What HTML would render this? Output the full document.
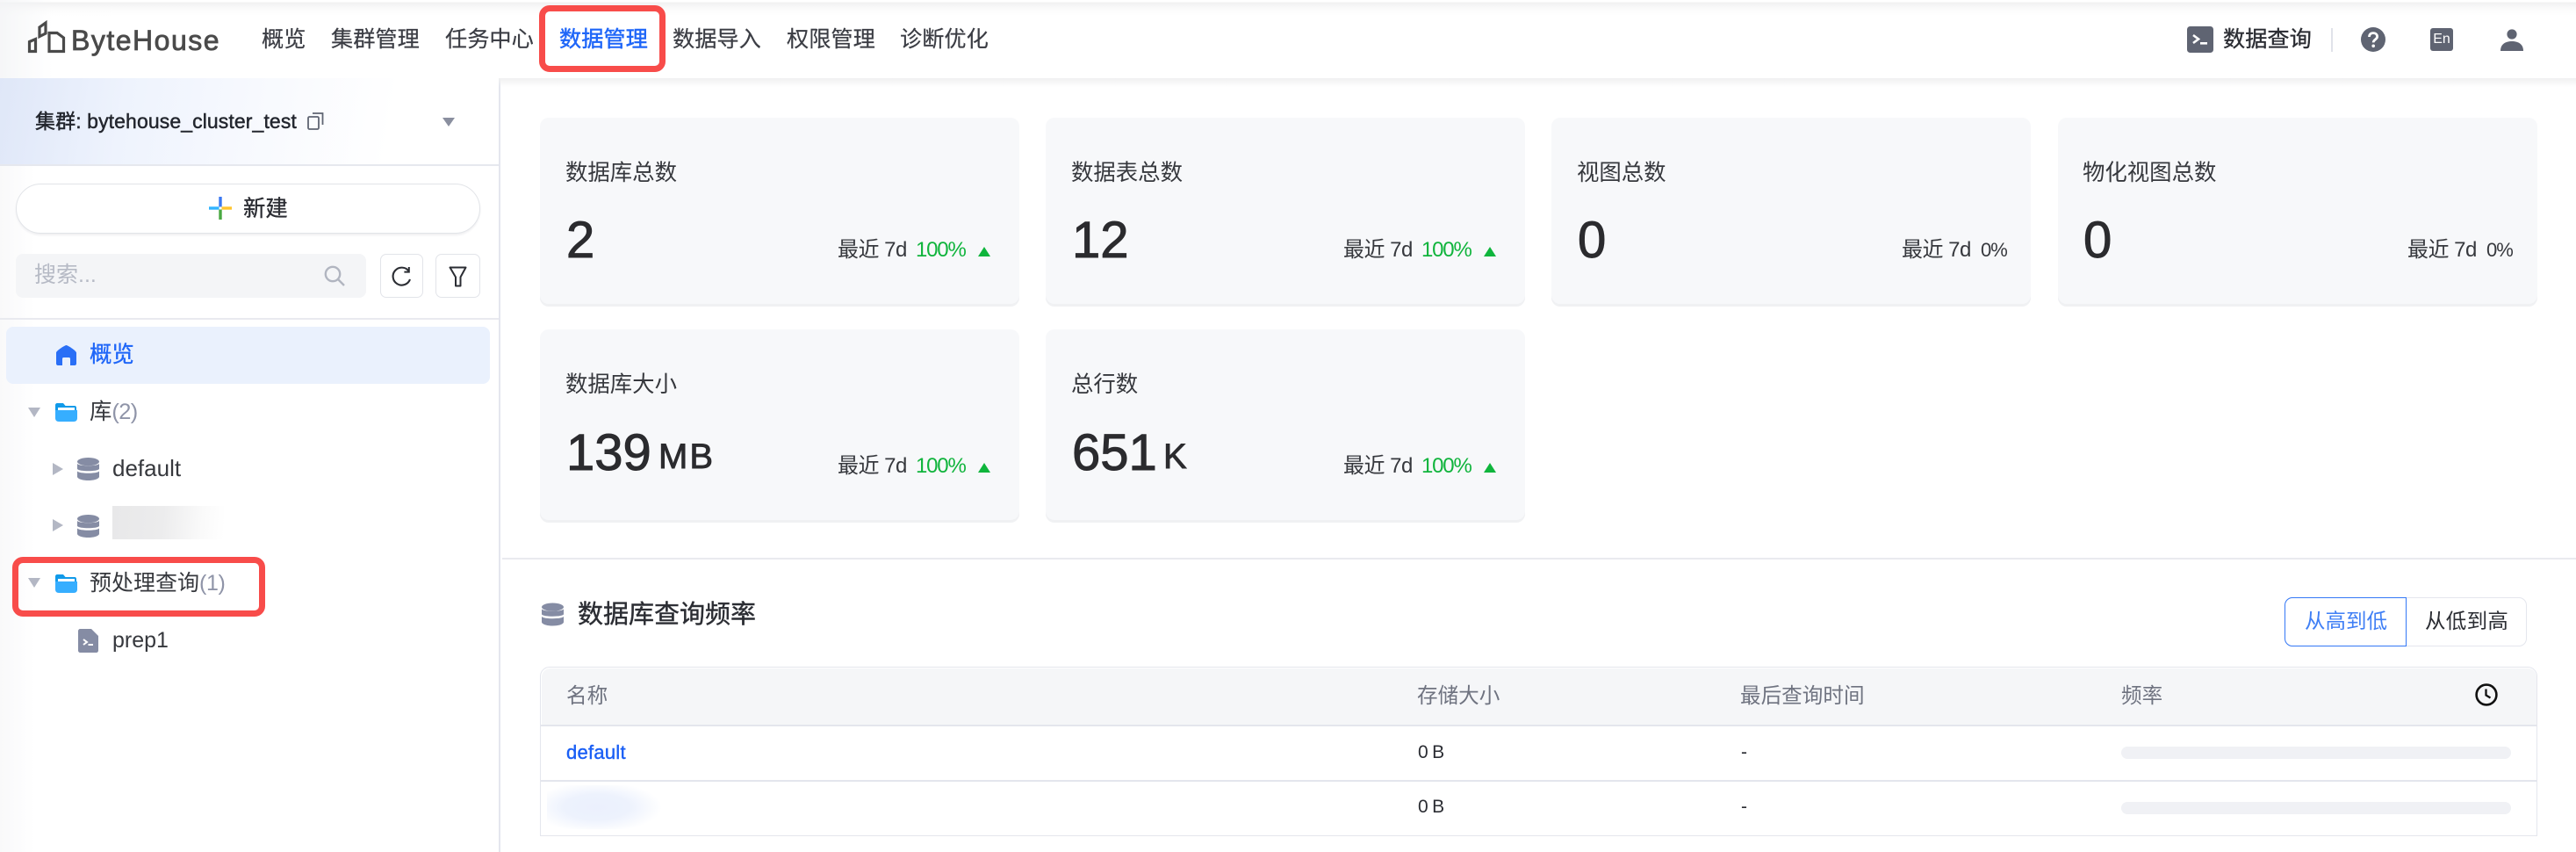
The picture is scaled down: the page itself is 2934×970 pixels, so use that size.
<!DOCTYPE html>
<html lang="zh">
<head>
<meta charset="utf-8">
<title>ByteHouse</title>
<style>
html,body{margin:0;padding:0;width:2934px;height:970px;overflow:hidden;background:#fff}
body{position:relative;font-family:"Liberation Sans","Noto Sans CJK SC",sans-serif;color:#2b2d33;filter:blur(.35px)}
.a{position:absolute}
.t{position:absolute;white-space:nowrap;height:40px;line-height:40px;margin-top:-20px;font-size:25.4px}
.nav{color:#3b3d44;-webkit-text-stroke:.2px #3b3d44;font-size:25.2px}
.m{-webkit-text-stroke:.45px currentColor}
svg{position:absolute;display:block;overflow:visible}
.card{position:absolute;width:546px;background:#f7f8fa;border-radius:10px;box-shadow:inset 0 -3px 0 #f0f1f3}
.title{color:#36383d}
.num{font-size:58px;color:#2b2b2e;-webkit-text-stroke:1px #2b2b2e;height:70px;line-height:70px;margin-top:-35px}
.unit{font-size:40px;letter-spacing:2px;color:#2b2b2e;-webkit-text-stroke:.9px #2b2b2e;height:50px;line-height:50px;margin-top:-25px}
.meta{font-size:24px;color:#36383d;letter-spacing:-.5px}
.g{font-size:24px;color:#10b43c;letter-spacing:-1.2px}
.z{font-size:22px;color:#36383d;letter-spacing:-1px}
.tri{position:absolute;width:0;height:0;border-left:7.5px solid transparent;border-right:7.5px solid transparent;border-bottom:11px solid #0fb53c}
.th{font-size:23.6px;color:#6f7380}
.td{font-size:21px;color:#2b2d33;letter-spacing:-.7px}
.bar{position:absolute;left:2416px;width:444px;height:14px;border-radius:7px;background:#f0f1f5}
.red{position:absolute;box-sizing:border-box;border:7.5px solid #f84c4a;border-radius:12px}
.h{position:absolute;background:#e4e6ed}
</style>
</head>
<body>

<!-- sidebar background -->
<div class="a" style="left:0;top:89px;width:568px;height:881px;background:linear-gradient(90deg,#f9f9fa 0,#fff 40px)"></div>
<div class="a" style="left:568px;top:89px;width:2px;height:881px;background:#e4e6ee"></div>

<!-- header -->
<div class="a" style="left:0;top:0;width:2934px;height:89px;background:linear-gradient(180deg,#fff 0,#fff 2px,#f1f1f2 3px,#fbfbfb 10px,#fff 18px)"></div>
<div class="a" style="left:0;top:0;width:60px;height:89px;background:linear-gradient(90deg,rgba(243,244,246,.8),rgba(255,255,255,0))"></div>
<div class="a" style="left:0;top:89px;width:2934px;height:10px;background:linear-gradient(180deg,#f0f0f1,rgba(255,255,255,0))"></div>

<svg style="left:0;top:0" width="90" height="70" viewBox="0 0 90 70" fill="none" stroke="#4a4a4a" stroke-width="3.2" stroke-linejoin="miter">
  <path d="M33.5 47.5 L40.5 44.5 V58.5 H33.5 Z"/>
  <path d="M45 31 L52 26 V38 L45 41.5 Z"/>
  <path d="M56 37.5 H65 L72.5 43 V58.5 H56 Z"/>
</svg>
<div class="t m" style="left:81px;top:46px;font-size:32px;letter-spacing:1.5px;color:#4a4a4a;-webkit-text-stroke:.8px #4a4a4a">ByteHouse</div>

<div class="t nav" style="left:298px;top:45px">概览</div>
<div class="t nav" style="left:377px;top:45px">集群管理</div>
<div class="t nav" style="left:507px;top:45px">任务中心</div>
<div class="t nav" style="left:637px;top:45px;color:#1f66f8;-webkit-text-stroke:.45px #1f66f8">数据管理</div>
<div class="t nav" style="left:766px;top:45px">数据导入</div>
<div class="t nav" style="left:896px;top:45px">权限管理</div>
<div class="t nav" style="left:1025px;top:45px">诊断优化</div>
<div class="red" style="left:614px;top:6px;width:144px;height:76px"></div>

<!-- header right -->
<svg style="left:2491px;top:30px" width="30" height="30" viewBox="0 0 30 30">
  <rect width="30" height="30" rx="3.5" fill="#5f6472"/>
  <path d="M7 10 L13 14.5 L7 19" fill="none" stroke="#fff" stroke-width="2.6"/>
  <rect x="15" y="18" width="8" height="2.6" fill="#fff"/>
</svg>
<div class="t" style="left:2532px;top:45px;font-size:25.2px;color:#2b2d33;-webkit-text-stroke:.35px #2b2d33">数据查询</div>
<div class="a" style="left:2655px;top:32px;width:2px;height:27px;background:#e0e2e9"></div>
<svg style="left:2689px;top:31px" width="28" height="28" viewBox="0 0 28 28">
  <circle cx="14" cy="14" r="14" fill="#5f6472"/>
  <path d="M9.5 11 C9.5 8 11.5 6.6 14 6.6 C16.8 6.6 18.6 8.3 18.6 10.6 C18.6 14 14.2 14 14.2 17.4" fill="none" stroke="#fff" stroke-width="2.8"/>
  <circle cx="14.2" cy="21.3" r="1.8" fill="#fff"/>
</svg>
<div class="a" style="left:2768px;top:32px;width:26px;height:26px;border-radius:3px;background:#5f6472;color:#fff;font-size:16px;line-height:26px;text-align:center">En</div>
<svg style="left:2848px;top:33px" width="26" height="25" viewBox="0 0 26 25">
  <circle cx="13" cy="6" r="5.6" fill="#5f6472"/>
  <path d="M0 25 C0 17 6 14 13 14 C20 14 26 17 26 25 Z" fill="#5f6472"/>
</svg>

<!-- cluster -->
<div class="a" style="left:0;top:89px;width:568px;height:98px;background:linear-gradient(100deg,#dfe7f8 0,#eef3fd 25%,#f7f9fe 50%,#fff 78%);border-bottom:2px solid #e6e8ee;box-sizing:content-box"></div>
<div class="t" style="left:40px;top:138px;font-size:23px;letter-spacing:.1px;color:#23262e;-webkit-text-stroke:.45px #23262e">集群: bytehouse_cluster_test</div>
<svg style="left:350px;top:128px" width="19" height="20" viewBox="0 0 19 20" fill="none" stroke="#5f6472" stroke-width="1.8">
  <rect x="1" y="5" width="12" height="14" rx="1.5"/>
  <path d="M6 1 H17.5 V14"/>
</svg>
<div class="a" style="left:504px;top:134px;width:0;height:0;border-left:7px solid transparent;border-right:7px solid transparent;border-top:10px solid #8a8f9f"></div>

<!-- new button -->
<div class="a" style="left:18px;top:209px;width:529px;height:57px;box-sizing:border-box;background:#fff;border:1.5px solid #e2e4e8;border-radius:29px;box-shadow:0 2px 2px #f0f0f2"></div>
<svg style="left:238px;top:224px" width="26" height="26" viewBox="0 0 26 26">
  <rect x="11.3" y="0" width="3.4" height="11.5" fill="#3a78f2"/>
  <rect x="0" y="11.3" width="11.5" height="3.4" fill="#30b4ff"/>
  <rect x="14.5" y="11.3" width="11.5" height="3.4" fill="#ffc52e"/>
  <rect x="11.3" y="14.5" width="3.4" height="11.5" fill="#49a942"/>
</svg>
<div class="t" style="left:277px;top:238px;color:#2b2d33;-webkit-text-stroke:.35px #2b2d33">新建</div>

<!-- search -->
<div class="a" style="left:18px;top:289px;width:399px;height:50px;background:#f4f5f7;border-radius:8px"></div>
<div class="t" style="left:39px;top:313px;font-size:25px;color:#b6bac5">搜索...</div>
<svg style="left:369px;top:302px" width="25" height="24" viewBox="0 0 25 24" fill="none" stroke="#b1b5c0" stroke-width="2.4">
  <circle cx="10" cy="10" r="8.2"/>
  <path d="M16 16 L23 23"/>
</svg>
<div class="a" style="left:433px;top:289px;width:49px;height:50px;box-sizing:border-box;background:#fff;border:1.5px solid #e2e4e9;border-radius:7px"></div>
<svg style="left:446px;top:303px" width="23" height="24" viewBox="0 0 23 24" fill="none" stroke="#2b2d33" stroke-width="2.1">
  <path d="M19.5 5.5 A10 10 0 1 0 21 15"/>
  <path d="M19.8 1 V6.6 H14.4" stroke-width="2"/>
</svg>
<div class="a" style="left:496px;top:289px;width:51px;height:50px;box-sizing:border-box;background:#fff;border:1.5px solid #e2e4e9;border-radius:7px"></div>
<svg style="left:511px;top:303px" width="21" height="24" viewBox="0 0 21 24" fill="none" stroke="#2b2d33" stroke-width="2" stroke-linejoin="round">
  <path d="M1.5 1.5 H19.5 L13.5 12.5 V22.5 H8 V12.5 Z"/>
</svg>

<div class="a" style="left:0;top:362px;width:568px;height:1.5px;background:#e9eaef"></div>

<!-- tree -->
<div class="a" style="left:7px;top:372px;width:551px;height:65px;background:#eaf1fd;border-radius:8px"></div>
<svg style="left:64px;top:393px" width="23" height="23" viewBox="0 0 23 23">
  <path d="M11.5 0 C13 0 22.5 6 23 8.5 V21 C23 22.2 22 23 21 23 H16 V15.5 C16 14.5 15.3 14 14.5 14 H8.5 C7.7 14 7 14.5 7 15.5 V23 H2 C1 23 0 22.2 0 21 V8.5 C.5 6 10 0 11.5 0 Z" fill="#2a6ff6"/>
</svg>
<div class="t" style="left:102px;top:404px;color:#1f66f8;-webkit-text-stroke:.35px #1f66f8">概览</div>

<div class="a" style="left:32px;top:464px;width:0;height:0;border-left:7.5px solid transparent;border-right:7.5px solid transparent;border-top:11px solid #b3b7c4"></div>
<svg style="left:63px;top:459px" width="25" height="21" viewBox="0 0 25 21">
  <path d="M2 0 H9 L11.5 3 H22 C23.3 3 24 4 24 5 V9 H0 V2 C0 1 1 0 2 0 Z" fill="#119ae9"/>
  <rect x="3" y="5" width="19" height="4" fill="#fff"/>
  <path d="M0 8 H25 V17 C25 19.5 23.5 21 21 21 H4 C1.5 21 0 19.5 0 17 Z" fill="#36aeff"/>
</svg>
<div class="t" style="left:102px;top:469px;color:#36383d">库<span style="color:#8f94a8;letter-spacing:-.6px">(2)</span></div>

<div class="a" style="left:60px;top:527px;width:0;height:0;border-top:7.5px solid transparent;border-bottom:7.5px solid transparent;border-left:12px solid #b3b7c4"></div>
<svg style="left:88px;top:521px" width="25" height="26" viewBox="0 0 25 26">
  <ellipse cx="12.5" cy="4.6" rx="12.5" ry="4.6" fill="#858ca4"/>
  <path d="M0 7 C2.5 10 22.5 10 25 7 V13 C22.5 16 2.5 16 0 13 Z" fill="#858ca4"/>
  <path d="M0 15.5 C2.5 18.5 22.5 18.5 25 15.5 V22 C24 24.8 18 26 12.5 26 C7 26 1 24.8 0 22 Z" fill="#858ca4"/>
</svg>
<div class="t" style="left:128px;top:533px;font-size:26px;color:#36383d">default</div>

<div class="a" style="left:60px;top:591px;width:0;height:0;border-top:7.5px solid transparent;border-bottom:7.5px solid transparent;border-left:12px solid #b3b7c4"></div>
<svg style="left:88px;top:586px" width="25" height="26" viewBox="0 0 25 26">
  <ellipse cx="12.5" cy="4.6" rx="12.5" ry="4.6" fill="#858ca4"/>
  <path d="M0 7 C2.5 10 22.5 10 25 7 V13 C22.5 16 2.5 16 0 13 Z" fill="#858ca4"/>
  <path d="M0 15.5 C2.5 18.5 22.5 18.5 25 15.5 V22 C24 24.8 18 26 12.5 26 C7 26 1 24.8 0 22 Z" fill="#858ca4"/>
</svg>
<div class="a" style="left:128px;top:576px;width:127px;height:38px;background:linear-gradient(95deg,#e8e8e9 0,#ececed 45%,#fafafa 80%,#fff 100%)"></div>

<div class="a" style="left:32px;top:658px;width:0;height:0;border-left:7.5px solid transparent;border-right:7.5px solid transparent;border-top:11px solid #b3b7c4"></div>
<svg style="left:63px;top:654px" width="25" height="21" viewBox="0 0 25 21">
  <path d="M2 0 H9 L11.5 3 H22 C23.3 3 24 4 24 5 V9 H0 V2 C0 1 1 0 2 0 Z" fill="#119ae9"/>
  <rect x="3" y="5" width="19" height="4" fill="#fff"/>
  <path d="M0 8 H25 V17 C25 19.5 23.5 21 21 21 H4 C1.5 21 0 19.5 0 17 Z" fill="#36aeff"/>
</svg>
<div class="t" style="left:102px;top:664px;font-size:25px;color:#36383d">预处理查询<span style="color:#8f94a8;letter-spacing:-.4px">(1)</span></div>
<div class="red" style="left:14px;top:634px;width:288px;height:68px"></div>

<svg style="left:89px;top:716px" width="23" height="27" viewBox="0 0 23 27">
  <path d="M2.5 0 H15 L23 8 V24.5 C23 26 22 27 20.5 27 H2.5 C1 27 0 26 0 24.5 V2.5 C0 1 1 0 2.5 0 Z" fill="#858ca4"/>
  <path d="M6 12 L10 15 L6 18" fill="none" stroke="#fff" stroke-width="2"/>
  <rect x="11.5" y="17" width="5.5" height="2" fill="#fff"/>
</svg>
<div class="t" style="left:128px;top:729px;font-size:25px;color:#36383d">prep1</div>

<!-- cards -->
<div class="card" style="left:615px;top:134px;height:215px"></div>
<div class="card" style="left:1191px;top:134px;height:215px"></div>
<div class="card" style="left:1767px;top:134px;height:215px"></div>
<div class="card" style="left:2344px;top:134px;height:215px"></div>
<div class="card" style="left:615px;top:375px;height:220px"></div>
<div class="card" style="left:1191px;top:375px;height:220px"></div>

<div class="t title" style="left:644px;top:197px">数据库总数</div>
<div class="t title" style="left:1220px;top:197px">数据表总数</div>
<div class="t title" style="left:1796px;top:197px">视图总数</div>
<div class="t title" style="left:2372px;top:197px">物化视图总数</div>
<div class="t title" style="left:644px;top:438px">数据库大小</div>
<div class="t title" style="left:1220px;top:438px">总行数</div>

<div class="t num" style="left:645px;top:274px">2</div>
<div class="t num" style="left:1221px;top:274px">12</div>
<div class="t num" style="left:1797px;top:274px">0</div>
<div class="t num" style="left:2373px;top:274px">0</div>
<div class="t num" style="left:645px;top:516px">139</div>
<div class="t unit" style="left:750px;top:520px">MB</div>
<div class="t num" style="left:1221px;top:516px">651</div>
<div class="t unit" style="left:1325px;top:520px">K</div>

<div class="t meta" style="left:954px;top:285px">最近 7d</div>
<div class="t g" style="left:1043px;top:285px">100%</div>
<div class="tri" style="left:1114px;top:281px"></div>
<div class="t meta" style="left:1530px;top:285px">最近 7d</div>
<div class="t g" style="left:1619px;top:285px">100%</div>
<div class="tri" style="left:1690px;top:281px"></div>
<div class="t meta" style="left:2166px;top:285px">最近 7d</div>
<div class="t z" style="left:2256px;top:285px">0%</div>
<div class="t meta" style="left:2742px;top:285px">最近 7d</div>
<div class="t z" style="left:2832px;top:285px">0%</div>
<div class="t meta" style="left:954px;top:531px">最近 7d</div>
<div class="t g" style="left:1043px;top:531px">100%</div>
<div class="tri" style="left:1114px;top:527px"></div>
<div class="t meta" style="left:1530px;top:531px">最近 7d</div>
<div class="t g" style="left:1619px;top:531px">100%</div>
<div class="tri" style="left:1690px;top:527px"></div>

<!-- section -->
<div class="a" style="left:572px;top:635px;width:2362px;height:1.5px;background:#e9eaef"></div>
<svg style="left:617px;top:686px" width="25" height="27" viewBox="0 0 25 26">
  <ellipse cx="12.5" cy="4.6" rx="12.5" ry="4.6" fill="#858ca4"/>
  <path d="M0 7 C2.5 10 22.5 10 25 7 V13 C22.5 16 2.5 16 0 13 Z" fill="#858ca4"/>
  <path d="M0 15.5 C2.5 18.5 22.5 18.5 25 15.5 V22 C24 24.8 18 26 12.5 26 C7 26 1 24.8 0 22 Z" fill="#858ca4"/>
</svg>
<div class="t" style="left:658px;top:700px;font-size:29px;color:#2b2d33;-webkit-text-stroke:.4px #2b2d33">数据库查询频率</div>

<div class="a" style="left:2602px;top:680px;width:276px;height:56px;box-sizing:border-box;border:1.5px solid #e4e6ed;border-radius:9px;background:#fff"></div>
<div class="a" style="left:2602px;top:680px;width:139px;height:56px;box-sizing:border-box;border:1.5px solid #3478f6;border-radius:9px 0 0 9px;background:#fff"></div>
<div class="t" style="left:2625px;top:707px;font-size:23.5px;color:#3f7ff5">从高到低</div>
<div class="t" style="left:2762px;top:707px;font-size:23.5px;letter-spacing:.3px;color:#2b2d33">从低到高</div>

<!-- table -->
<div class="a" style="left:615px;top:759px;width:2275px;height:193px;box-sizing:border-box;border:1.5px solid #e4e6ed;border-radius:11px 11px 0 0;background:#fff"></div>
<div class="a" style="left:616.5px;top:760.5px;width:2272px;height:65px;background:#f5f6f8;border-radius:10px 10px 0 0"></div>
<div class="h" style="left:615px;top:825px;width:2275px;height:1.5px"></div>
<div class="h" style="left:615px;top:888px;width:2275px;height:1.5px"></div>

<div class="t th" style="left:645px;top:793px">名称</div>
<div class="t th" style="left:1614px;top:793px">存储大小</div>
<div class="t th" style="left:1982px;top:793px">最后查询时间</div>
<div class="t th" style="left:2416px;top:793px">频率</div>
<svg style="left:2819px;top:778px" width="26" height="26" viewBox="0 0 26 26" fill="none" stroke="#111" stroke-width="2.6">
  <circle cx="13" cy="13" r="11.4"/>
  <path d="M12.5 6.5 V13.5 L17.5 16.5" stroke-width="2.3"/>
</svg>

<div class="t" style="left:645px;top:857px;font-size:22px;letter-spacing:.25px;color:#1a5ff5;-webkit-text-stroke:.4px #1a5ff5">default</div>
<div class="t td" style="left:1615px;top:857px">0 B</div>
<div class="t td" style="left:1983px;top:857px">-</div>
<div class="bar" style="top:850px"></div>

<div class="a" style="left:623px;top:894px;width:135px;height:50px;background:radial-gradient(ellipse 55% 58% at 42% 50%,#ebf0fd 0,#edf2fd 50%,rgba(255,255,255,0) 100%)"></div>
<div class="t td" style="left:1615px;top:919px">0 B</div>
<div class="t td" style="left:1983px;top:919px">-</div>
<div class="bar" style="top:913px"></div>

</body>
</html>
